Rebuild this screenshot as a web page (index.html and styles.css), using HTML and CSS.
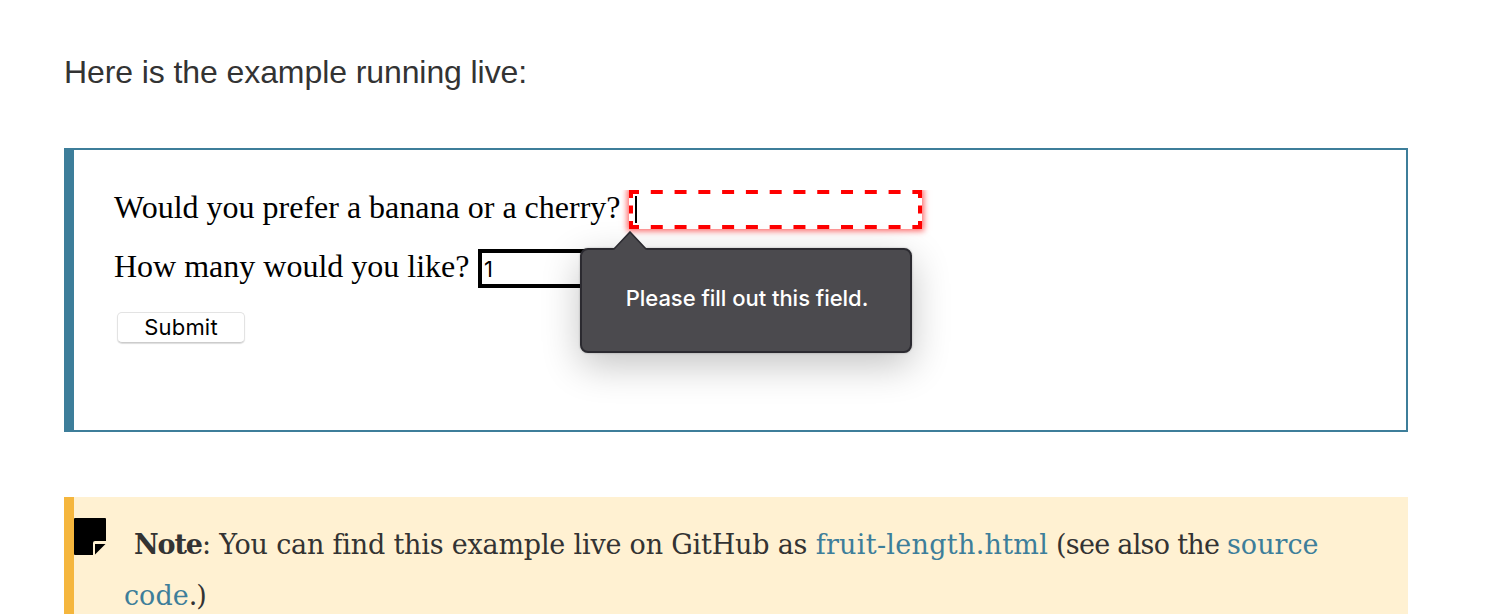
FILE: index.html
```html
<!DOCTYPE html>
<html lang="en">
<head>
<meta charset="utf-8">
<title>Form validation example</title>
<link rel="stylesheet" href="styles.css">
</head>
<body>
<p class="intro">Here is the example running live:</p>
<section class="demo">
  <div class="row row-choice">
    <label class="label-choice">Would you prefer a banana or a cherry?</label>
    <div class="clip">
      <div class="field invalid">
        <svg class="dashes" width="293" height="39" viewBox="0 0 293 39" fill="none" stroke="#f00" stroke-width="4">
          <path d="M0 2H293M0 37H293" stroke-dasharray="12 11.78" stroke-dashoffset="2"/>
          <path d="M2 0V39M291 0V39" stroke-dasharray="8 7.5"/>
        </svg>
        <span class="caret"></span>
      </div>
    </div>
  </div>
  <div class="row row-count">
    <label class="label-count">How many would you like?</label>
    <div class="field count">1</div>
  </div>
  <button class="submit">Submit</button>
  <div class="tooltip">
    <svg class="arrow" width="34" height="20" viewBox="0 0 34 20"><path d="M0 18.5L1 18 17 1 33 18 34 18.5V20H0Z" fill="#4b4a4e"/><path d="M0 18H1L17 1 33 18H34" fill="none" stroke="#2b2a30" stroke-width="1.6"/></svg>
    <span class="message">Please fill out this field.</span>
  </div>
</section>
<aside class="note">
  <svg class="note-icon" width="32" height="37" viewBox="0 0 32 37"><path d="M1 0H31Q32 0 32 1V23H21Q19 23 19 25V37H1Q0 37 0 36V1Q0 0 1 0Z"/><path d="M21 26H31.5L21 36.5Z"/></svg>
  <p class="note-line first"><b class="strong">Note</b><span class="lead">: You can find this example live on GitHub as </span><a class="link file">fruit-length.html</a><span class="aside-text"> (see also the </span><a class="link">source</a></p>
  <p class="note-line"><a class="link">code</a><span class="tail">.)</span></p>
</aside>
</body>
</html>
```
FILE: styles.css
```css
* { box-sizing: border-box; }
body { margin: 0; padding: 52px 90px 0 64px; height: 614px; overflow: hidden; background: #fff; color: #333; font-family: "Liberation Sans", Arial, sans-serif; }
.intro { margin: 0 0 56px; font-size: 32px; line-height: 40px; letter-spacing: -.09px; white-space: nowrap; }
.demo { position: relative; height: 284px; border: 2px solid #3d7e9a; border-left-width: 10px; padding: 40px 40px 0; color: #000; font-family: "Liberation Serif", "Times New Roman", serif; font-size: 32px; }
.row { display: flex; white-space: nowrap; line-height: 35px; }
.row-choice { height: 59px; }
.row-count { height: 63px; }
.label-choice { width: 515px; }
.label-count { width: 364px; }
.clip { height: 54px; margin-left: -12px; padding: 0 12px; overflow: hidden; }
.field { position: relative; height: 39px; width: 293px; background: #fff; }
.invalid { box-shadow: 0 0 6px 2px rgba(255, 0, 0, .6); }
.dashes { display: block; }
.caret { position: absolute; left: 6px; top: 6px; width: 2px; height: 27px; background: #000; }
.count { border: 4px solid #000; padding-left: 2px; font: 22px/32px Inter, sans-serif; }
.submit { display: block; width: 128px; height: 31px; margin: 0 0 0 3px; padding: 0; border: 1px solid #e3e3e3; border-bottom-color: #ccc; border-radius: 5px; background: #fff; color: #000; box-shadow: 0 1px 1px #ddd; font: 22px/26px Inter, sans-serif; padding-bottom: 2px; letter-spacing: .2px; }
.tooltip { position: absolute; left: 506px; top: 98px; width: 332px; height: 105px; display: flex; align-items: center; justify-content: center; border: 2px solid #2b2a30; border-radius: 8px; background: #4b4a4e; color: #fff; box-shadow: 0 12px 38px rgba(0, 0, 0, .24), 0 0 2px rgba(0, 0, 0, .3); font: 500 22px/30px Inter, sans-serif; }
.arrow { position: absolute; left: 31px; top: -19px; }
.message { white-space: nowrap; margin: -6px 0 0 2px; letter-spacing: -.03px; }
.note { position: relative; margin-top: 65px; height: 117px; padding: 22px 0 0 50px; border-left: 10px solid #f5b63d; background: #fff1d2; font: 27px/51px "DejaVu Serif", serif; }
.note-icon { position: absolute; left: 0; top: 21px; }
.note-line { margin: 0; white-space: pre; }
.first { padding-left: 10px; }
.link { color: #3d7e9a; }
.strong { letter-spacing: -1.1px; }
.lead { letter-spacing: -.2px; }
.file { letter-spacing: .3px; }
.aside-text { letter-spacing: -.73px; }
.tail { letter-spacing: -1px; }
```
